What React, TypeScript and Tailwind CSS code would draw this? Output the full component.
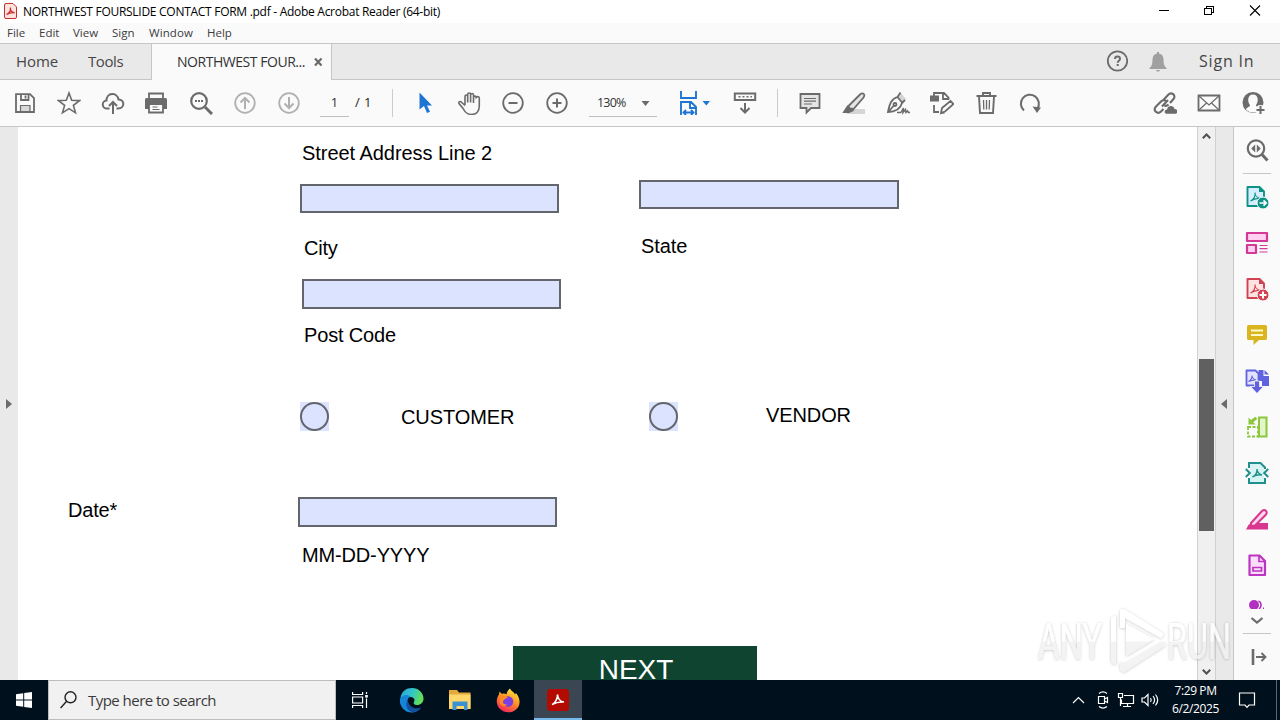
import React from 'react';

type IconProps = { children: React.ReactNode; size?: number; color?: string; sw?: number };

const Icon = ({ children, size = 24, color = '#6b6b6b', sw = 1.8 }: IconProps) => (
  <svg width={size} height={size} viewBox="0 0 24 24" fill="none" stroke={color} strokeWidth={sw} className="block shrink-0">
    {children}
  </svg>
);

const Slot = ({ children }: { children: React.ReactNode }) => (
  <div className="flex h-full w-11 shrink-0 items-center justify-center">{children}</div>
);

const Field = ({ className = '' }: { className?: string }) => (
  <div className={`border-2 border-[#64666e] bg-[#dce3ff] ${className}`} />
);

const Radio = () => (
  <div className="h-[29px] w-[29px] shrink-0 bg-[#dce3ff]">
    <div className="h-full w-full rounded-full border-2 border-[#64666e]" />
  </div>
);

const TitleBar = () => (
  <div className="flex h-[23px] shrink-0 items-center bg-white pl-1 font-['Open_Sans',sans-serif]">
    <svg width="13" height="16" viewBox="0 0 13 16" className="mb-0.5 block shrink-0">
      <path d="M.5 2A1.500 1.500 0 0 1 2 .5h7L12.500 4v10a1.500 1.500 0 0 1-1.500 1.500H2A1.500 1.500 0 0 1 .5 14z" fill="#ffe3e1" stroke="#c9302c" />
      <path d="M2.500 11.500c3-1.300 4.200-4.300 3.900-7-.3 3 1.700 5 4.300 5.300-2.700-.3-5.500.2-8.200 1.700z" fill="none" stroke="#c9302c" strokeWidth="1.300" />
    </svg>
    <span className="ml-1.5 w-[500px] whitespace-nowrap text-xs tracking-[-0.28px] text-black">
      NORTHWEST FOURSLIDE CONTACT FORM .pdf - Adobe Acrobat Reader (64-bit)
    </span>
    <svg width="137" height="23" viewBox="0 0 137 23" fill="none" stroke="#000" shapeRendering="crispEdges" className="ml-auto shrink-0">
      <path d="M16 10.500h10M61.500 8.500h7v6h-7zM63.500 8.500v-2h7v6h-2" />
      <path d="M107 5.500l10 10M117 5.500l-10 10" shapeRendering="auto" strokeWidth="1.100" />
    </svg>
  </div>
);

const MenuBar = () => (
  <div className="flex h-5 shrink-0 items-center bg-[#fafafa] pl-[7px] font-['Open_Sans',sans-serif] text-[11.5px] text-[#3c3c3c]">
    <span className="w-8">File</span>
    <span className="w-[34px]">Edit</span>
    <span className="w-[39px]">View</span>
    <span className="w-[37px]">Sign</span>
    <span className="w-[58px] tracking-[0.1px]">Window</span>
    <span>Help</span>
  </div>
);

const TabBar = () => (
  <div className="flex h-[37px] shrink-0 border-t border-[#c6c6c6] bg-[#e9e9e9] font-['Open_Sans',sans-serif] text-sm text-[#464646]">
    <div className="flex w-[152px] items-center border-r border-b border-[#c6c6c6] pl-4">
      <span className="w-[72px] text-[15px] tracking-[-0.1px]">Home</span>
      <span className="text-[15px] tracking-[-0.4px]">Tools</span>
    </div>
    <div className="flex w-[179px] items-center bg-[#fafafa] pl-[25px] text-[#323232]">
      <span className="w-[136px] whitespace-nowrap tracking-[-0.46px]">NORTHWEST FOUR...</span>
      <svg width="10" height="10" viewBox="0 0 10 10" stroke="#6b6b6b" strokeWidth="2.200">
        <path d="M2 1.500l6.500 7M8.500 1.500L2 8.500" />
      </svg>
    </div>
    <div className="flex flex-1 items-center justify-end border-b border-l border-[#c6c6c6] pr-[26px]">
      <svg width="22" height="22" viewBox="0 0 22 22" fill="none" stroke="#6b6b6b" strokeWidth="1.800" className="mb-px">
        <circle cx="11.500" cy="11" r="9.700" />
        <path d="M9 9c0-3.300 5-3.300 5 0 0 1.800-2.300 1.600-2.300 3.700M11.700 14v2" strokeWidth="2" />
      </svg>
      <svg width="18" height="20" viewBox="0 0 18 20" fill="#a0a0a0" className="ml-[21px] mr-[32px]">
        <path d="M8 0h2v1.500c3 .6 4.500 3 4.500 6 0 4.500 1 7 3 8.500v1H.5v-1c2-1.500 3-4 3-8.500 0-3 1.500-5.400 4.500-6zM7 18h4c-.5 2-3.500 2-4 0z" />
      </svg>
      <span className="w-[55px] whitespace-nowrap text-[16px] tracking-[0.8px]">Sign In</span>
    </div>
  </div>
);

const Toolbar = () => (
  <div className="flex h-[47px] shrink-0 items-center border-b border-[#c6c6c6] bg-[#fafafa] pl-[3px] font-['Open_Sans',sans-serif]">
    <Slot>
      <Icon>
        <path d="M3 3.200h14l4 4V21H3zM8 3.500V9h7.500V3.500M12.500 4.500v3" />
        <path d="M7.500 20.500v-6h9.500v6z" fill="#d8d8d8" strokeWidth="1.200" />
      </Icon>
    </Slot>
    <Slot>
      <Icon sw={1.600}>
        <path d="M12 2l2.700 7.300 7.800.3-6.100 4.800 2.100 7.400-6.500-4.200-6.500 4.200 2.100-7.400-6.100-4.800 7.800-.3z" />
      </Icon>
    </Slot>
    <Slot>
      <Icon sw={2}>
        <path d="M8.500 17.500H6a4 4 0 0 1-.5-8C5.500 1.500 16 .8 17.500 8.500c6.500 0 6.500 9-.5 9h-1.500" />
        <path d="M12 23V11.500M8 15l4-4 4 4" />
      </Icon>
    </Slot>
    <div className="flex h-full w-[42px] items-center justify-center">
      <Icon>
        <path d="M5 8V2.500h14V8" />
        <path d="M1 8.500A1.500 1.500 0 0 1 2.500 7h19A1.500 1.500 0 0 1 23 8.500V18h-4v-4H5v4H1z" fill="#6b6b6b" stroke="none" />
        <path d="M5 13h14v8.500H5z" fill="#fafafa" />
        <path d="M8.500 16h5M8.500 18.500h7" strokeWidth="1.200" />
      </Icon>
    </div>
    <div className="flex h-full w-[46px] items-center justify-center pl-px">
      <Icon sw={2.200}>
        <circle cx="10" cy="10" r="7.800" />
        <path d="M16 16l7 7" strokeWidth="3" />
        <path d="M6 10h2M9 10h2M12 10h2" />
      </Icon>
    </div>
    <Slot>
      <Icon color="#b0b0b0">
        <circle cx="12" cy="12" r="9.800" />
        <path d="M12 18V7M7.500 11.500L12 7l4.500 4.500" strokeWidth="2" />
      </Icon>
    </Slot>
    <Slot>
      <Icon color="#b0b0b0">
        <circle cx="12" cy="12" r="9.800" />
        <path d="M12 6v11M7.500 12.500L12 17l4.500-4.500" strokeWidth="2" />
      </Icon>
    </Slot>
    <div className="ml-[9px] flex h-7 w-[29px] items-center justify-center border-b border-[#c0c0c0] text-[13px] text-[#323232]">1</div>
    <span className="ml-1.5 w-[37px] text-[13px] tracking-[0.4px] text-[#222]">/ 1</span>
    <div className="h-7 w-px bg-[#cbcbcb]" />
    <div className="ml-2.5 flex h-full">
      <Slot>
        <svg width="24" height="24" viewBox="0 0 24 24" fill="#1f75d1">
          <path d="M6.500 1.500v17l4.500-3.500 3 7 3-1.300-3-6.200h5z" />
        </svg>
      </Slot>
      <Slot>
        <Icon sw={1.600}>
          <path d="M8 14V5.500c0-2 2.700-2 2.700 0v6V3.500c0-2 2.900-2 2.900 0v8V4c0-2 2.900-2 2.900 0v8V6.500c0-1.900 2.700-1.900 2.700 0l.3-.3c1.200-1.200 2.800-.5 2.800 1V15c0 5-2.800 8.500-8 8.500-4 0-6.200-2-8.200-6L2 12.500c-.8-1.800 1.300-2.800 2.500-1.200L8 14.500" />
        </Icon>
      </Slot>
      <Slot>
        <Icon>
          <circle cx="12" cy="12" r="9.800" />
          <path d="M7.500 12h9" strokeWidth="2" />
        </Icon>
      </Slot>
      <Slot>
        <Icon>
          <circle cx="12" cy="12" r="9.800" />
          <path d="M7.500 12h9M12 7.500v9" strokeWidth="2" />
        </Icon>
      </Slot>
    </div>
    <div className="ml-2.5 flex h-7 w-[68px] items-center justify-between border-b border-[#c0c0c0] pl-2 pr-[7px] pt-0.5 text-[#323232]">
      <span className="text-[12.5px] tracking-[-0.8px]">130%</span>
      <svg width="9" height="5" viewBox="0 0 9 5" fill="#6b6b6b"><path d="M.5 0h8l-4 5z" /></svg>
    </div>
    <div className="ml-[19px] flex items-center">
      <Icon color="#1f75d1" sw={1.900}>
        <path d="M5 0v7h15V0M5 24V11h10l5 5v8M14 11.500V17h6M8 21.500h9M10 19l-2.500 2.500L10 24M15 19l2.500 2.500L15 24" />
      </Icon>
      <svg width="8" height="5" viewBox="0 0 8 5" fill="#1f75d1" className="ml-0.5"><path d="M.5 0H8L4.300 4.500z" /></svg>
    </div>
    <div className="ml-[13px] flex h-full items-center">
      <Slot>
        <Icon>
          <path d="M1.800 2.500h20.400V9H1.800zM12 12v9.500M7.500 17l4.500 4.500 4.500-4.500" strokeWidth="2" />
          <path d="M5.500 5.800h2M9.500 5.800h2M13.500 5.800h2M17.500 5.800h1.500" strokeWidth="1.500" />
        </Icon>
      </Slot>
    </div>
    <div className="ml-[10px] h-7 w-px bg-[#cbcbcb]" />
    <div className="ml-[10px] flex h-full">
      <Slot>
        <Icon>
          <path d="M2.500 3h19v14H13l-4.500 4.500V17h-6z" fill="#e4e4e4" />
          <path d="M6 7.500h12M6 10.200h12M6 13h8" strokeWidth="1.200" />
        </Icon>
      </Slot>
      <Slot>
        <Icon>
          <path d="M10 18h13v5H4z" fill="#d5d5d5" stroke="none" />
          <path d="M6.500 15l11.500-11.500c3-2.500 5.500 0 3.500 3L11.500 18l-4.500-.5z" fill="#e4e4e4" />
          <path d="M5.500 15.500l5 4-3.500 1.500H2z" fill="#6b6b6b" />
        </Icon>
      </Slot>
      <Slot>
        <Icon sw={1.800}>
          <path d="M12 5l3-3 5 6-3.500 3.500z" fill="#d5d5d5" stroke="none" />
          <path d="M14.500 1.500L11.500 6c-6 1.500-8 7-9.500 15 7 0 12-2 14-9l3-3M11.500 6l5 6M2.500 20.500l5.500-6" />
          <circle cx="9" cy="13.500" r="1.500" />
          <path d="M15 21.500l2.500-4.500-.5 4.500 2.500-3 .5 3 1.500-1.500 1 1.500h1.500M11 21.500h4" strokeWidth="1.500" />
        </Icon>
      </Slot>
      <Slot>
        <Icon sw={1.800}>
          <path d="M0 4.500h9v6H0z" fill="#6b6b6b" stroke="none" />
          <path d="M4 5V2h10l4.500 4.500V9M13 2.500V8h5M4 14v7h5M11 22l1-5 8.500-7 3 3-8.500 7.500zM11 22l3.500-.5" />
        </Icon>
      </Slot>
      <Slot>
        <Icon sw={1.900}>
          <path d="M2.500 5h20M9 4.500V2h7v2.500M5 5.500L6 22h13l1-16.500" />
          <path d="M9.500 9l.3 9.500M12.500 9v9.500M15.500 9l-.3 9.500" strokeWidth="1.300" />
        </Icon>
      </Slot>
      <Slot>
        <Icon sw={2}>
          <path d="M6 19.500A9 9 0 1 1 19.500 17.500" />
          <path d="M14.500 15.500l8.500 1-4 5.500z" fill="#6b6b6b" stroke="none" />
        </Icon>
      </Slot>
    </div>
    <div className="ml-auto flex h-full pr-[5px]">
      <Slot>
        <Icon sw={2.100}>
          <path d="M9 15.500L15 9M10 9.500l5-5.500c3.500-4 8.500.5 5.500 4L17 12M13.500 10.500c-2-2-4-1.500-5.500 0l-5 5c-3.500 4 1.500 8.500 5 5l2.500-2.500M11.500 14.500c1.500 1 2.500.5 4-1" />
          <path d="M13.500 22.800c-3-.5-2-4.300.5-4.300 1-5 7-4 7.500-.5 4 0 4 4.300 1 4.800z" fill="#6b6b6b" stroke="none" />
        </Icon>
      </Slot>
      <Slot>
        <Icon sw={1.800}>
          <path d="M1.500 4.500h21v15h-21z" />
          <path d="M2 5l10 9L22 5M2 19l7.500-7M22 19l-7.500-7" strokeWidth="1.200" />
        </Icon>
      </Slot>
      <Slot>
        <Icon>
          <circle cx="12" cy="11.500" r="10.500" fill="#6b6b6b" stroke="none" />
          <path d="M12 3.500c6 0 5.500 8 3 10.500 0 2.500 3 1.500 4 4.500-3 4-11 4-14 0 1-3 4-2 4-4.500-2.500-2.500-3-10.500 3-10.500z" fill="#fafafa" stroke="none" />
          <circle cx="19.500" cy="19" r="5" fill="#fafafa" stroke="none" />
          <path d="M15.500 19h8M19.500 15v8" strokeWidth="2" />
        </Icon>
      </Slot>
    </div>
  </div>
);

const FormPage = () => (
  <div className="h-full w-[1179px] shrink-0 overflow-hidden bg-white font-['Liberation_Sans',Arial,sans-serif] text-xl leading-6 text-black">
    <div className="flex h-[519px]">
      <div className="w-[280px] pl-[50px] pt-[371px] tracking-[-0.2px]">Date*</div>
      <div className="w-[341px] pt-3.5">
        <div className="pl-1 tracking-[-0.05px]">Street Address Line 2</div>
        <Field className="ml-0.5 mt-[19px] h-[29px] w-[259px]" />
        <div className="mt-[23px] pl-1.5 tracking-[-0.2px]">City</div>
        <Field className="ml-1 mt-[19px] h-[30px] w-[259px]" />
        <div className="mt-[14px] pl-1.5 tracking-[-0.15px]">Post Code</div>
        <div className="mt-[55px] flex items-center pl-0.5">
          <Radio />
          <span className="ml-[72px] tracking-[-0.1px]">CUSTOMER</span>
        </div>
        <Field className="mt-[66px] h-[30px] w-[259px]" />
        <div className="mt-4 pl-1 tracking-[-0.15px]">MM-DD-YYYY</div>
      </div>
      <div className="pt-[53px]">
        <Field className="h-[29px] w-[260px]" />
        <div className="mt-[25px] pl-0.5 tracking-[-0.1px]">State</div>
        <div className="mt-[144px] flex pl-2.5">
          <Radio />
          <span className="ml-[88px] pt-px tracking-[-0.1px]">VENDOR</span>
        </div>
      </div>
    </div>
    <div className="ml-[495px] flex h-[34px] w-[244px] justify-center bg-[#0e4430] pl-0.5 pt-2 text-[28px] leading-8 text-white">
      <span>NEXT</span>
    </div>
  </div>
);

const Chevron = ({ up = false }: { up?: boolean }) => (
  <svg width="9" height="6" viewBox="0 0 9 6" fill="none" stroke="#505050" strokeWidth="2">
    <path d={up ? 'M.8 5.200L4.500 1.500l3.700 3.700' : 'M.8.8l3.700 3.700L8.200.8'} />
  </svg>
);

const Scrollbar = () => (
  <div className="flex w-[18px] shrink-0 flex-col items-center border-l border-[#d0d0d0] bg-[#f0f0f0]">
    <div className="flex h-[17px] items-center"><Chevron up /></div>
    <div className="mt-[215px] h-[172px] w-[15px] bg-[#606060]" />
    <div className="mt-auto flex h-4 items-center"><Chevron /></div>
  </div>
);

const PdfSheet = ({ color, fill }: { color: string; fill: string }) => (
  <>
    <path d="M2.500 2h12l4.500 4.500v14.500h-16.500z" fill={fill} stroke={color} strokeWidth="1.900" strokeLinejoin="round" />
    <path d="M14 1.500V7h5.500z" fill={color} stroke="none" />
    <path d="M5.500 16c3-1.500 5-5 4.500-8.500 0 3 2.500 5.500 5.500 6-3-.5-7 .5-10 2.500z" stroke={color} strokeWidth="1.100" />
  </>
);

const SIDE_TOOLS = [
  <Icon color="#0f9186">
    <PdfSheet color="#0f9186" fill="#d3efff" />
    <circle cx="18" cy="18" r="6" fill="#0f9186" stroke="#fafafa" strokeWidth="1" />
    <path d="M14.500 18h6M18.500 15.300l2.700 2.700-2.700 2.700" stroke="#fff" strokeWidth="1.700" />
  </Icon>,
  <Icon color="#d23a97">
    <path d="M2 2h20v8H2zM2 14h9v8H2z" fill="#ffd0ef" strokeWidth="2.200" strokeLinejoin="round" />
    <path d="M14.500 14.500h8M14.500 17.700h8M14.500 21h8" strokeWidth="1.200" />
  </Icon>,
  <Icon color="#d14252">
    <PdfSheet color="#d14252" fill="#ffe2e2" />
    <circle cx="18" cy="18" r="6" fill="#d14252" stroke="#fafafa" strokeWidth="1" />
    <path d="M14.500 18h7M18 14.500v7" stroke="#fff" strokeWidth="2" />
  </Icon>,
  <Icon>
    <path d="M3.500 2h17A1.500 1.500 0 0 1 22 3.500v12a1.500 1.500 0 0 1-1.500 1.500H14l-5.500 5v-5h-5A1.500 1.500 0 0 1 2 15.500v-12A1.500 1.500 0 0 1 3.500 2z" fill="#dab520" stroke="none" />
    <path d="M6 7.500h12M6 12h12" stroke="#fff8c8" strokeWidth="2" />
  </Icon>,
  <Icon color="#6163de">
    <path d="M1.500 1.500h9l3 3v12h-12z" fill="#e2e4ff" strokeLinejoin="round" />
    <path d="M3.500 12.500c2.500-1 3.800-4 3.500-6 0 2 2 4 4 4.500-2-.2-5 .2-7.500 1.500z" strokeWidth="1.100" />
    <path d="M13.500 1h5v6H24v10h-7v-5h-3.500zM19.500 1L24 5.500h-4.500z" fill="#6163de" stroke="none" />
    <path d="M9.500 12h5v5.500h4L12 24.500 5.500 17.500h4z" fill="#6163de" stroke="#fafafa" strokeWidth=".8" />
  </Icon>,
  <Icon color="#8cc63a">
    <path d="M14 2.500h7.500v19H14z" fill="#e3f6ca" strokeWidth="2" />
    <path d="M3 12v9.500h10V12z" strokeDasharray="3 1.500" />
    <path d="M3.500 2.500v7h7L8.300 7.300l4-3.500-2-2L6 5z" fill="#8cc63a" stroke="none" />
  </Icon>,
  <Icon color="#218f8b">
    <path d="M5 3h10l4 4v14H5z" fill="#d7f4f4" stroke="none" />
    <path d="M4 7V2h11.500L20 6.500V8M4 17v5h16v-5M.8 8l4 4-4 4M23.200 8l-4 4 4 4" strokeWidth="2" />
    <path d="M7.500 16c3-1.500 4.800-5 4.500-8 0 3 2 5 5 6-3-.5-6.500 0-9.500 2z" strokeWidth="1.400" />
  </Icon>,
  <Icon color="#d83790">
    <path d="M1 22.500L4 17l2 1 7-2h10v6.500z" fill="#d83790" stroke="none" />
    <path d="M6 16L17 4c3-2.500 6 .5 4 3.500L10 18.500l-4 .5z" fill="#ffd6ec" strokeWidth="2" />
  </Icon>,
  <Icon color="#bb35c0">
    <path d="M4.500 2.500h10L20 8v14H4.500z" fill="#fbdcfd" strokeWidth="2.200" strokeLinejoin="round" />
    <path d="M14 3v5.500h5.500M8 14.500h8.500V18H8z" strokeWidth="1.700" />
  </Icon>,
];

const SidePanel = () => (
  <div className="flex w-[47px] shrink-0 flex-col items-center border-l border-[#c6c6c6] bg-[#fafafa]">
    <div className="flex h-[46px] items-center">
      <Icon sw={2.200}>
        <circle cx="11" cy="10.500" r="8.200" />
        <path d="M17 16.500l5.500 6" strokeWidth="3" />
        <path d="M10.200 6.500v8l-4-4zM11.800 6.500v8l4-4z" fill="#6b6b6b" stroke="none" />
      </Icon>
    </div>
    <div className="h-px w-7 bg-[#c6c6c6]" />
    {SIDE_TOOLS.map((tool, i) => (
      <div key={i} className="flex h-[46px] shrink-0 items-center">{tool}</div>
    ))}
    <div className="flex h-[21px] w-full shrink-0 items-end pl-[14px]">
      <svg width="20" height="9" viewBox="0 0 20 9" fill="none" stroke="#b130c0" strokeWidth="1.600">
        <circle cx="6" cy="5" r="5" fill="#b130c0" stroke="none" />
        <path d="M10.500 1c3 1 3.500 5.500.5 8M15 8.200h1" />
      </svg>
    </div>
    <div className="flex h-6 shrink-0 items-center">
      <svg width="14" height="8" viewBox="0 0 14 8" fill="none" stroke="#6b6b6b" strokeWidth="2.200">
        <path d="M1.500 1L7 5.500 12.500 1" />
      </svg>
    </div>
    <div className="h-px w-7 shrink-0 bg-[#c6c6c6]" />
    <div className="flex flex-1 items-center pl-1">
      <svg width="16" height="16" viewBox="0 0 16 16" fill="none" stroke="#6b6b6b" strokeWidth="1.900">
        <path d="M2 0v16" strokeWidth="2.600" />
        <path d="M5 8h9M10.500 4l4 4-4 4" />
      </svg>
    </div>
  </div>
);

// White lettering that only shows through its soft shadow
const Watermark = () => (
  <svg
    width="210"
    height="74"
    viewBox="0 0 210 74"
    className="pointer-events-none absolute left-[1030px] top-[604px] font-['Roboto',sans-serif] text-[50px]"
  >
    <defs>
      <linearGradient id="wm" x1="0" y1="0" x2="0" y2="74" gradientUnits="userSpaceOnUse">
        <stop offset="0.500" stopColor="#fff" />
        <stop offset="0.520" stopColor="#f1f1f1" />
      </linearGradient>
      <filter id="wmShadow" x="-5%" y="-10%" width="110%" height="125%">
        <feDropShadow dx="0" dy="0.500" stdDeviation="1.500" floodColor="#000" floodOpacity="0.300" />
      </filter>
    </defs>
    <g filter="url(#wmShadow)" opacity="0.800" fill="url(#wm)">
      <text x="8" y="55" textLength="64" lengthAdjust="spacingAndGlyphs">ANY</text>
      <text x="137" y="55" textLength="64" lengthAdjust="spacingAndGlyphs">RUN</text>
      <path d="M81 14l5-3v50l-5-3z" />
      <path d="M90 6l4-1 40 25-3 4-36-20v10h-5z" />
      <path d="M96 20l28 15-28 17z" />
      <path d="M133 38L95 60l-5-1v7l4 2 42-27z" />
    </g>
  </svg>
);

const Taskbar = () => (
  <div className="flex h-10 shrink-0 items-center bg-[#01101d] font-['Open_Sans',sans-serif] text-white">
    <div className="flex w-12 shrink-0 justify-center">
      <svg width="16" height="16" viewBox="0 0 16 16" fill="#fff">
        <path d="M0 2.300l7.200-1v6.200H0zM8.200 1.100L16 0v7.500H8.200zM0 8.500h7.200v6.200l-7.200-1zM8.200 8.500H16V16l-7.800-1.100z" />
      </svg>
    </div>
    <div className="flex h-full w-72 shrink-0 items-center border border-[#bdbdbd] bg-[#f1f1f1] pl-[11px] text-[#3a3a3a]">
      <svg width="17" height="18" viewBox="0 0 17 18" fill="none" stroke="#222" strokeWidth="1.400">
        <circle cx="10.500" cy="6.300" r="5.500" />
        <path d="M6.600 10.300L.6 17" />
      </svg>
      <span className="ml-[11px] text-[15px] tracking-[-0.53px]">Type here to search</span>
    </div>
    <div className="flex w-12 justify-center">
      <svg width="17" height="16" viewBox="0 0 17 16" fill="none" stroke="#fff" strokeWidth="1.200">
        <path d="M.6 0v2.500h10V0M.6 5h10v6H.6zM.6 16v-2.500h10V16M14.500 0v2M14.500 6.500V16" />
        <path d="M13.200 3h2.600v2.600h-2.600z" fill="#fff" stroke="none" />
      </svg>
    </div>
    <div className="flex w-[54px] justify-center">
      <svg width="25" height="26" viewBox="0 0 24 26">
        <defs>
          <linearGradient id="edgeTop" x1="0" y1="0" x2="1" y2="0.300">
            <stop offset="0" stopColor="#2aa7e0" />
            <stop offset="0.550" stopColor="#32c4c9" />
            <stop offset="1" stopColor="#62df58" />
          </linearGradient>
        </defs>
        <path d="M1 11C2 4 7 1 12.500 1 19 1 24 6 24 11.500c0 4-3 6.500-6.500 6.500-3 0-4-1.500-3-3 1.500-2.500-.5-5-3.500-5-4 0-8 4-10 7z" fill="url(#edgeTop)" />
        <path d="M.5 12C3 7.500 8 7 11 9.500 7 11 7 17 10 20c3 3 8 3 11.500.5C19 24.500 15 25.500 12 25.500 5 25.500-.5 19 .5 12z" fill="#1585d8" />
        <path d="M8 13c-3 5 0 11 5 12.300 4-.3 7-2.300 8.500-4.800-6 2.500-12-.5-13.500-7.500z" fill="#134f9b" />
      </svg>
    </div>
    <div className="flex w-11 justify-center">
      <svg width="22" height="20" viewBox="0 0 22 20">
        <path d="M0 0h8l2 2.500h11.500V19H0z" fill="#e5a83b" />
        <path d="M0 4.500h21.500V19H0z" fill="#ffd76b" />
        <path d="M3.500 20v-8.500h15V20H15v-4H7.500v4z" fill="#3b91d4" />
      </svg>
    </div>
    <div className="flex w-[52px] justify-center">
      <svg width="24" height="25" viewBox="0 0 24 24">
        <defs>
          <linearGradient id="fox" x1="0.800" y1="0" x2="0.300" y2="1">
            <stop offset="0" stopColor="#fff04a" />
            <stop offset="0.450" stopColor="#ff9a1f" />
            <stop offset="1" stopColor="#f5235d" />
          </linearGradient>
        </defs>
        <path d="M14 0c1 2.500 4 3.500 5 6l1-1.500c5 6 4.500 13 0 16.500-5 4.500-13 3.500-17-1.500C0 15.500 0 10 3 6l.5-3L6 5.500c2-.8 3-.3 4.500.5C11 3 12 1.500 14 0z" fill="url(#fox)" />
        <circle cx="12" cy="13" r="5.300" fill="#7b3fe4" />
        <path d="M4 8c3-2 6-1 8 1.500-2 0-3 .8-4.500 2.500-1.500 3 1 4.500 3.500 3.500-2 4-7 2-7.500-2z" fill="#ff8a24" />
      </svg>
    </div>
    <div className="flex h-full w-12 items-center justify-center border-b-2 border-[#76b9ed] bg-[#3a4651] pt-0.5">
      <svg width="22" height="22" viewBox="0 0 22 22">
        <rect width="22" height="22" rx="3.500" fill="#b30b00" />
        <path d="M5 15.500c3-1 5.800-6 5.500-10 .3 4 3 7.200 6.500 7.500-4-.3-8 .3-12 2.500z" fill="none" stroke="#fff" strokeWidth="1.600" />
      </svg>
    </div>
    <div className="ml-auto flex h-full items-center">
      <svg width="92" height="20" viewBox="0 0 92 20" fill="none" stroke="#fff" strokeWidth="1.200">
        <path d="M3 13l5.500-5.500L14 13" />
        <path d="M28.500 6.500h6v7h-6zM34.500 9l3-1.500v5l-3-1.500M29 3.500c2.500-2 5.500-2 8 0M29 16.500c2.500 2 5.500 2 8 0" />
        <path d="M54 5.500h9.500v8H51.500V9.500M48.500 3.500h4v4h-4zM50.500 7.500v8.500M53 16.500h8M57.500 13.500v3" />
        <path d="M72 8h2.500L78 4.500v11L74.500 12H72zM80.500 8c1 1.300 1 2.700 0 4M83 6c2 2.500 2 5.500 0 8M85.500 4.500c2.800 3.500 2.800 7.500 0 11" />
      </svg>
      <div className="w-[67px] text-center text-xs leading-[18px] tracking-[-0.4px]">
        <div>7:29 PM</div>
        <div>6/2/2025</div>
      </div>
      <svg width="18" height="18" viewBox="0 0 18 18" fill="none" stroke="#fff" strokeWidth="1.200" className="ml-[9px] mr-[20px]">
        <path d="M1.500 2h15v12H11l-2 2.300L7 14H1.500z" />
      </svg>
      <div className="mr-[3px] h-full w-px bg-[#5a6470]" />
    </div>
  </div>
);

export default function App() {
  return (
    <div className="relative flex h-[720px] w-[1280px] flex-col overflow-hidden bg-white">
      <TitleBar />
      <MenuBar />
      <TabBar />
      <Toolbar />
      <div className="flex h-[553px] shrink-0">
        <div className="flex w-[18px] shrink-0 items-center bg-[#e9e9e9] pl-1.5">
          <svg width="6" height="10" viewBox="0 0 6 10" fill="#6b6b6b"><path d="M0 0l6 5-6 5z" /></svg>
        </div>
        <FormPage />
        <Scrollbar />
        <div className="flex w-[18px] shrink-0 items-center justify-center border-l border-[#d0d0d0] bg-[#e9e9e9] pr-px">
          <svg width="6" height="10" viewBox="0 0 6 10" fill="#6b6b6b"><path d="M6 0L0 5l6 5z" /></svg>
        </div>
        <SidePanel />
      </div>
      <Taskbar />
      <Watermark />
    </div>
  );
}
